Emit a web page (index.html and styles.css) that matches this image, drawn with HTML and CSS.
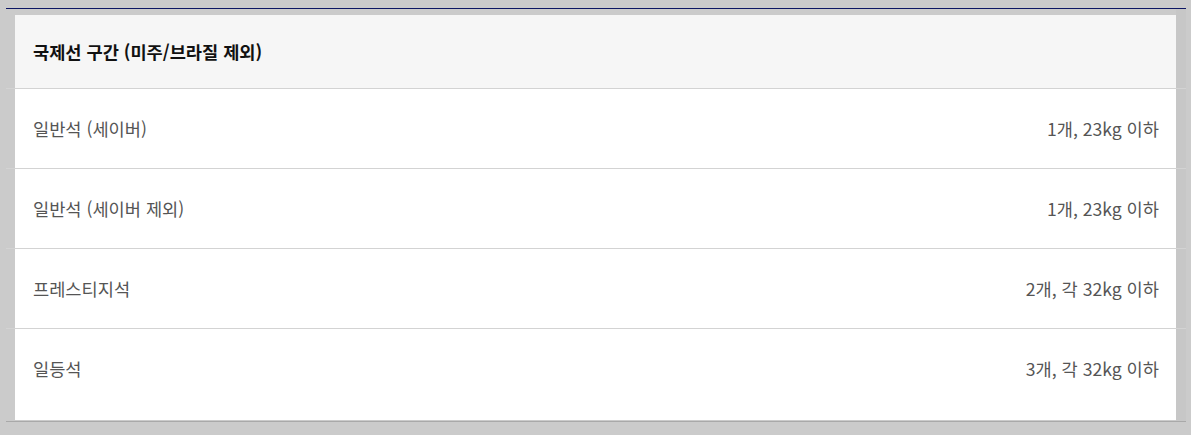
FILE: index.html
```html
<!DOCTYPE html>
<html lang="ko">
<head>
<meta charset="utf-8">
<title>수하물</title>
<link rel="stylesheet" href="styles.css">
</head>
<body>
<div class="frame">
  <div class="row row-head"><div class="cell cell-head">국제선 구간 (미주/브라질 제외)</div></div>
  <div class="row"><div class="cell"><span>일반석 (세이버)</span><span>1개, 23kg 이하</span></div></div>
  <div class="row"><div class="cell"><span>일반석 (세이버 제외)</span><span>1개, 23kg 이하</span></div></div>
  <div class="row"><div class="cell"><span>프레스티지석</span><span>2개, 각 32kg 이하</span></div></div>
  <div class="row row-last"><div class="cell cell-last"><span>일등석</span><span>3개, 각 32kg 이하</span></div></div>
</div>
</body>
</html>
```

FILE: styles.css
```css
html, body {
  margin: 0;
  padding: 0;
  background: #cbcbcb;
  font-family: "Noto Sans CJK KR", "Noto Sans", sans-serif;
}

.frame {
  width: 1180px;
  margin: 8px 0 0 6px;
  border-top: 1px solid #0d1663;
  padding-top: 6px;
  background: linear-gradient(to left, #c7c7c7 10px, #cbcbcb 10px);
}

.row {
  border-bottom: 1px solid #d3d3d3;
  padding: 0 10px 0 9px;
}

.cell {
  height: 79px;
  background: #fff;
  display: flex;
  align-items: center;
  justify-content: space-between;
  padding: 0 17px 0 18px;
  font-size: 17.6px;
  color: #555;
}

.cell-head {
  height: 73px;
  background: #f6f6f6;
  color: #111;
  font-weight: bold;
}

.row-last {
  border-bottom: 1px solid #a9a9a9;
  padding-bottom: 1px;
}

.cell-last {
  height: 79px;
  padding-bottom: 12px;
}
```
